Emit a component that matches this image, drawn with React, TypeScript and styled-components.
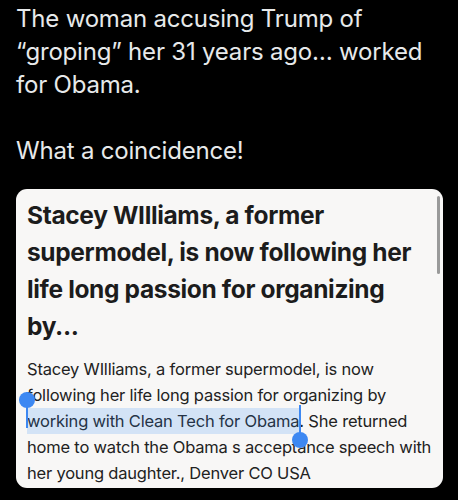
import styled, { createGlobalStyle } from "styled-components";

const GlobalStyle = createGlobalStyle`
  html, body {
    margin: 0;
    padding: 0;
    background: #000000;
  }
  body {
    width: 458px;
    height: 500px;
    overflow: hidden;
  }
`;

const Page = styled.div`
  display: flex;
  flex-direction: column;
  gap: 22px;
  padding: 2px 15px 0 16px;
  font-family: "Inter", "Noto Sans", sans-serif;
`;

const TweetText = styled.p`
  margin: 0;
  color: #e7e9ea;
  font-size: 24px;
  line-height: 33px;
  white-space: pre-line;
  letter-spacing: -0.2px;
`;

const Card = styled.div`
  position: relative;
  display: flex;
  flex-direction: column;
  gap: 11px;
  height: 299px;
  box-sizing: border-box;
  background: #f8f7f6;
  border-radius: 11px;
  padding: 8px 4px 0 11px;
  overflow: hidden;
`;

const ScrollThumb = styled.div`
  position: absolute;
  top: 7px;
  right: 3px;
  width: 3px;
  height: 78px;
  border-radius: 2px;
  background: #9a9a9a;
`;

const Title = styled.h2`
  margin: 0;
  padding-right: 8px;
  color: #1c1c1c;
  font-size: 24.5px;
  line-height: 37px;
  font-weight: 700;
  letter-spacing: -0.35px;
`;

const Body = styled.p`
  margin: 0;
  color: #222222;
  font-size: 16.5px;
  line-height: 26px;
  letter-spacing: -0.2px;
`;

const Selected = styled.span`
  position: relative;
  background: #d3e3f6;
  color: #253346;
  padding: 3px 0;
`;

const Handle = styled.span<{ side: "start" | "end" }>`
  position: absolute;
  left: ${(p) => (p.side === "start" ? "-1px" : "auto")};
  right: ${(p) => (p.side === "end" ? "-2px" : "auto")};
  top: ${(p) => (p.side === "start" ? "-16px" : "-3px")};
  width: 2px;
  height: 36px;
  background: #3d88f2;

  &::after {
    content: "";
    position: absolute;
    left: 50%;
    ${(p) => (p.side === "start" ? "top: 0;" : "bottom: -7px;")}
    width: 16px;
    height: 16px;
    margin-left: -8px;
    border-radius: 50%;
    background: #3d88f2;
  }
`;

export default function App() {
  return (
    <>
      <GlobalStyle />
      <Page>
        <TweetText>
          {"The woman accusing Trump of \u201cgroping\u201d her 31 years ago\u2026 worked for Obama.\n\nWhat a coincidence!"}
        </TweetText>
        <Card>
          <ScrollThumb />
          <Title>
            Stacey WIlliams, a former supermodel, is now following her life long passion for organizing by...
          </Title>
          <Body>
            Stacey WIlliams, a former supermodel, is now following her life long passion for organizing by{" "}
            <Selected>
              <Handle side="start" />
              working with Clean Tech for Obama
              <Handle side="end" />
            </Selected>
            . She returned home to watch the Obama s acceptance speech with her young daughter., Denver CO USA
          </Body>
        </Card>
      </Page>
    </>
  );
}
